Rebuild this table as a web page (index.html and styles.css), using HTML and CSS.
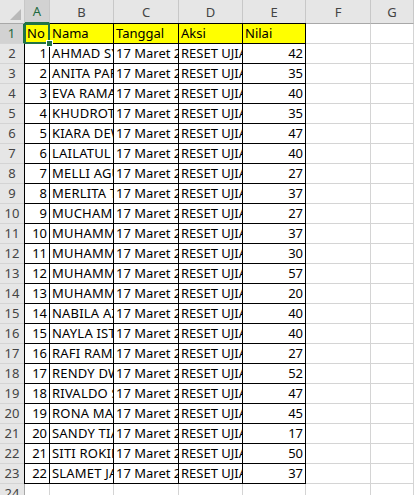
FILE: index.html
```html
<!DOCTYPE html>
<html>
<head>
<meta charset="utf-8">
<link rel="stylesheet" href="styles.css">
</head>
<body>
<div class="sheet">
  <div class="row hdr">
    <div class="corner"><span class="tri"></span></div>
    <div class="ch sel">A</div><div class="ch">B</div><div class="ch">C</div><div class="ch">D</div><div class="ch">E</div><div class="ch">F</div><div class="ch">G</div>
  </div>
  <div class="row">
    <div class="rh sel">1</div><div class="d y a first top">No</div><div class="d y top">Nama</div><div class="d y top">Tanggal</div><div class="d y top">Aksi</div><div class="d y top">Nilai</div><div class="g"></div><div class="g"></div>
  </div>
  <div class="row"><div class="rh">2</div><div class="d r a">1</div><div class="d n">AHMAD SYAFII</div><div class="d">17 Maret 2023</div><div class="d">RESET UJIAN</div><div class="d r">42</div><div class="g"></div><div class="g"></div></div>
  <div class="row"><div class="rh">3</div><div class="d r a">2</div><div class="d n">ANITA PARAMITA</div><div class="d">17 Maret 2023</div><div class="d">RESET UJIAN</div><div class="d r">35</div><div class="g"></div><div class="g"></div></div>
  <div class="row"><div class="rh">4</div><div class="d r a">3</div><div class="d n">EVA RAMADHANI</div><div class="d">17 Maret 2023</div><div class="d">RESET UJIAN</div><div class="d r">40</div><div class="g"></div><div class="g"></div></div>
  <div class="row"><div class="rh">5</div><div class="d r a">4</div><div class="d n">KHUDROTUL</div><div class="d">17 Maret 2023</div><div class="d">RESET UJIAN</div><div class="d r">35</div><div class="g"></div><div class="g"></div></div>
  <div class="row"><div class="rh">6</div><div class="d r a">5</div><div class="d n">KIARA DEWI</div><div class="d">17 Maret 2023</div><div class="d">RESET UJIAN</div><div class="d r">47</div><div class="g"></div><div class="g"></div></div>
  <div class="row"><div class="rh">7</div><div class="d r a">6</div><div class="d n">LAILATUL JANNAH</div><div class="d">17 Maret 2023</div><div class="d">RESET UJIAN</div><div class="d r">40</div><div class="g"></div><div class="g"></div></div>
  <div class="row"><div class="rh">8</div><div class="d r a">7</div><div class="d n">MELLI AGUSTIN</div><div class="d">17 Maret 2023</div><div class="d">RESET UJIAN</div><div class="d r">27</div><div class="g"></div><div class="g"></div></div>
  <div class="row"><div class="rh">9</div><div class="d r a">8</div><div class="d n">MERLITA TRI</div><div class="d">17 Maret 2023</div><div class="d">RESET UJIAN</div><div class="d r">37</div><div class="g"></div><div class="g"></div></div>
  <div class="row"><div class="rh">10</div><div class="d r a">9</div><div class="d n">MUCHAMMAD</div><div class="d">17 Maret 2023</div><div class="d">RESET UJIAN</div><div class="d r">27</div><div class="g"></div><div class="g"></div></div>
  <div class="row"><div class="rh">11</div><div class="d r a">10</div><div class="d n">MUHAMMAD</div><div class="d">17 Maret 2023</div><div class="d">RESET UJIAN</div><div class="d r">37</div><div class="g"></div><div class="g"></div></div>
  <div class="row"><div class="rh">12</div><div class="d r a">11</div><div class="d n">MUHAMMAD</div><div class="d">17 Maret 2023</div><div class="d">RESET UJIAN</div><div class="d r">30</div><div class="g"></div><div class="g"></div></div>
  <div class="row"><div class="rh">13</div><div class="d r a">12</div><div class="d n">MUHAMMAD</div><div class="d">17 Maret 2023</div><div class="d">RESET UJIAN</div><div class="d r">57</div><div class="g"></div><div class="g"></div></div>
  <div class="row"><div class="rh">14</div><div class="d r a">13</div><div class="d n">MUHAMMAD</div><div class="d">17 Maret 2023</div><div class="d">RESET UJIAN</div><div class="d r">20</div><div class="g"></div><div class="g"></div></div>
  <div class="row"><div class="rh">15</div><div class="d r a">14</div><div class="d n">NABILA AZZAHRA</div><div class="d">17 Maret 2023</div><div class="d">RESET UJIAN</div><div class="d r">40</div><div class="g"></div><div class="g"></div></div>
  <div class="row"><div class="rh">16</div><div class="d r a">15</div><div class="d n">NAYLA ISTIQOMAH</div><div class="d">17 Maret 2023</div><div class="d">RESET UJIAN</div><div class="d r">40</div><div class="g"></div><div class="g"></div></div>
  <div class="row"><div class="rh">17</div><div class="d r a">16</div><div class="d n">RAFI RAMADHAN</div><div class="d">17 Maret 2023</div><div class="d">RESET UJIAN</div><div class="d r">27</div><div class="g"></div><div class="g"></div></div>
  <div class="row"><div class="rh">18</div><div class="d r a">17</div><div class="d n">RENDY DWI</div><div class="d">17 Maret 2023</div><div class="d">RESET UJIAN</div><div class="d r">52</div><div class="g"></div><div class="g"></div></div>
  <div class="row"><div class="rh">19</div><div class="d r a">18</div><div class="d n">RIVALDO SAPUTRA</div><div class="d">17 Maret 2023</div><div class="d">RESET UJIAN</div><div class="d r">47</div><div class="g"></div><div class="g"></div></div>
  <div class="row"><div class="rh">20</div><div class="d r a">19</div><div class="d n">RONA MAULIDA</div><div class="d">17 Maret 2023</div><div class="d">RESET UJIAN</div><div class="d r">45</div><div class="g"></div><div class="g"></div></div>
  <div class="row"><div class="rh">21</div><div class="d r a">20</div><div class="d n">SANDY TIARA</div><div class="d">17 Maret 2023</div><div class="d">RESET UJIAN</div><div class="d r">17</div><div class="g"></div><div class="g"></div></div>
  <div class="row"><div class="rh">22</div><div class="d r a">21</div><div class="d n">SITI ROKIMAH</div><div class="d">17 Maret 2023</div><div class="d">RESET UJIAN</div><div class="d r">50</div><div class="g"></div><div class="g"></div></div>
  <div class="row"><div class="rh">23</div><div class="d r a">22</div><div class="d n">SLAMET JAYADI</div><div class="d">17 Maret 2023</div><div class="d">RESET UJIAN</div><div class="d r">37</div><div class="g"></div><div class="g"></div></div>
  <div class="row"><div class="rh">24</div><div class="g"></div><div class="g"></div><div class="g"></div><div class="g"></div><div class="g"></div><div class="g"></div><div class="g"></div></div>
</div>
</body>
</html>
```
FILE: styles.css
```css
html, body {
  margin: 0;
  padding: 0;
  background: #ffffff;
  overflow: hidden;
  height: 495px;
}
.sheet {
  width: 414px;
  font-family: "Noto Sans", "Open Sans", sans-serif;
  font-size: 13px;
  color: #000;
}
.row {
  display: grid;
  grid-template-columns: 25px 25px 64px 65px 64px 63px 65px 1fr;
  height: 20px;
}
.row > div {
  box-sizing: border-box;
  border-right: 1px solid #d4d4d4;
  border-bottom: 1px solid #d4d4d4;
  overflow: hidden;
  white-space: nowrap;
  padding: 0 2px;
  line-height: 19px;
}
.row.hdr {
  height: 24px;
}
.hdr > div {
  background: #e6e6e6;
  color: #444;
  text-align: center;
  line-height: 25px;
  border-right-color: #c8c8c8;
  border-bottom-color: #a8a8a8;
}
.corner {
  display: flex;
  justify-content: flex-end;
  align-items: flex-end;
  padding: 0 3px 3px 0 !important;
}
.tri {
  width: 0;
  height: 0;
  border-left: 11px solid transparent;
  border-bottom: 11px solid #b9b9b9;
}
.hdr > .ch.sel {
  background: #d2d2d2;
  color: #1e6a3e;
  border-bottom: 2px solid #217346;
  line-height: 23px;
}
.rh {
  background: #e6e6e6;
  color: #444;
  text-align: center;
  padding: 0 !important;
  border-right-color: #a8a8a8 !important;
  border-bottom-color: #d4d4d4;
}
.rh.sel {
  background: #d2d2d2;
  color: #1e6a3e;
  border-right: 2px solid #217346 !important;
}
.row > .d {
  border-right-color: #000;
  border-bottom-color: #000;
}
.d.n {
  letter-spacing: 0.2px;
}
.d.a {
  box-shadow: -1px 0 0 #000;
}
.d.top {
  box-shadow: 0 -1px 0 #000;
}
.d.a.top {
  box-shadow: -1px 0 0 #000, 0 -1px 0 #000;
}
.d.y {
  background: #ffff00;
}
.d.r {
  text-align: right;
}
.first {
  position: relative;
  overflow: visible !important;
}
.first::after {
  content: "";
  position: absolute;
  left: -1px;
  top: -1px;
  right: -1px;
  bottom: -1px;
  border: 2px solid #217346;
}
.first::before {
  content: "";
  position: absolute;
  right: -4px;
  bottom: -4px;
  width: 5px;
  height: 5px;
  background: #217346;
  border: 1px solid #fff;
  z-index: 2;
}
```
